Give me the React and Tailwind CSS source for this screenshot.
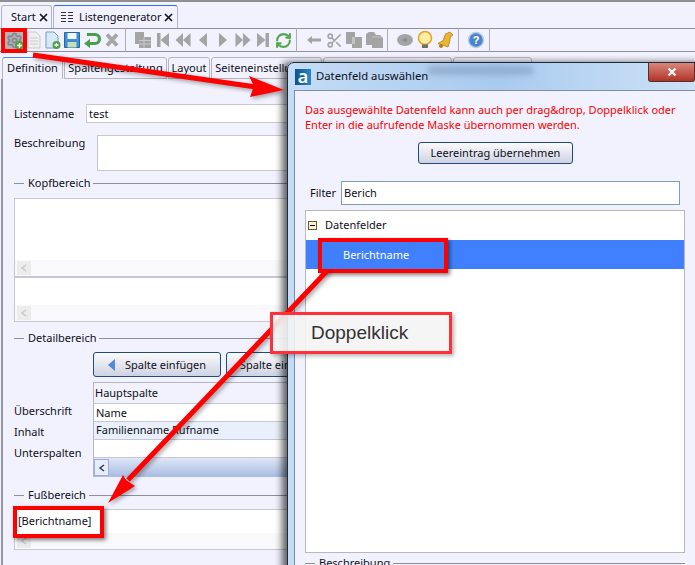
import { RefreshCw, Settings, Scissors } from 'lucide-react';

const font = { fontFamily: '"Noto Sans", Tahoma, sans-serif' };

function Sep() {
  return <div className="ml-[3px] mr-[7px] h-[24px] w-px shrink-0 bg-[#a9abb8]" />;
}

function Ico({ children }) {
  return (
    <svg viewBox="0 0 20 20" className="h-[20px] w-[20px] shrink-0">
      {children}
    </svg>
  );
}

const G = '#a4a4a4';

function CloseX() {
  return (
    <svg viewBox="0 0 9 9" className="h-[9px] w-[9px] shrink-0">
      <path d="M1 1l7 7M8 1L1 8" stroke="#15151c" strokeWidth="1.700" />
    </svg>
  );
}

function Toolbar() {
  return (
    <div className="flex h-[23px] items-center border-b border-[#8d8f9c] pl-[4px]">
      <div className="relative flex h-[20px] w-[20px] shrink-0 items-center justify-center bg-[#b4b4b8]">
        <Settings size={17} strokeWidth={2.6} color="#85888c" />
        <svg viewBox="0 0 9 9" className="absolute bottom-0 right-0 h-[9px] w-[9px]">
          <circle cx="4.500" cy="4.500" r="4.500" fill="#4aa43f" />
          <path d="M2 4.500h5M4.500 2v5" stroke="#fff" strokeWidth="1.400" />
        </svg>
      </div>
      <Ico>
        <path d="M4 2h8l4 4v12H4z" fill="#efefef" stroke="#c9c9c9" />
        <path d="M6 8h8M6 11h8M6 14h8" stroke="#cbcbcb" />
      </Ico>
      <div className="-ml-[2px]">
        <Ico>
          <path d="M4 2h8l4 4v12H4z" fill="#d9e8f8" stroke="#6f9fcf" />
          <circle cx="14.500" cy="15" r="4" fill="#4aa43f" />
          <path d="M12.500 15h4M14.500 13v4" stroke="#fff" strokeWidth="1.300" />
        </Ico>
      </div>
      <Ico>
        <path d="M2.500 2.500h15v15h-15z" fill="#3f8fd6" stroke="#2468a8" />
        <path d="M5.500 3h9v6h-9z" fill="#f3f7fb" />
        <path d="M5.500 12h9v5.500h-9z" fill="#bfe0b8" />
      </Ico>
      <Ico>
        <path d="M5 4.500h8a4.500 4.500 0 0 1 0 9H6" fill="none" stroke="#46a04a" strokeWidth="3.200" />
        <path d="M8 9v9l-6-4.500z" fill="#46a04a" />
      </Ico>
      <Ico>
        <path d="M5 4.500l10 11M15 4.500L5 15.500" stroke="#a6a6a6" strokeWidth="3.800" />
      </Ico>
      <Sep />
      <Ico>
        <path d="M2 2h9v5h7v11H6v-4H2z" fill={G} />
        <path d="M6 10.500h12M6 14h12M11 7v11" stroke="#c9c9c9" />
      </Ico>
      <Ico>
        <path d="M4 3h3.500v14H4zM16 3v14l-8.500-7z" fill={G} />
      </Ico>
      <Ico>
        <path d="M10 3v14l-7.500-7zM17.500 3v14L10 10z" fill={G} />
      </Ico>
      <Ico>
        <path d="M14 3v14l-8-7z" fill={G} />
      </Ico>
      <Ico>
        <path d="M6 3v14l8-7z" fill={G} />
      </Ico>
      <Ico>
        <path d="M2.500 3v14l7.500-7zM10 3v14l7.500-7z" fill={G} />
      </Ico>
      <Ico>
        <path d="M4 3v14l8.500-7zM12.500 3H16v14h-3.500z" fill={G} />
      </Ico>
      <div className="flex h-[20px] w-[20px] shrink-0 items-center justify-center">
        <RefreshCw size={17} strokeWidth={3} color="#55a84d" />
      </div>
      <Sep />
      <Ico>
        <path d="M3 10l5-4v2.500h9v3H8V14z" fill={G} />
      </Ico>
      <div className="flex h-[20px] w-[20px] shrink-0 items-center justify-center">
        <Scissors size={17} strokeWidth={2.2} color={G} />
      </div>
      <Ico>
        <path d="M2 2h9v5h7v11H8v-4H2z" fill={G} />
        <path d="M8 7h3v7H8z" fill="#c4c4c4" />
      </Ico>
      <Ico>
        <path d="M2 4l3-2h5l2 3h4l3 3v10H8v-3H2z" fill={G} />
        <path d="M8 7h10" stroke="#c4c4c4" />
      </Ico>
      <Sep />
      <Ico>
        <ellipse cx="10" cy="10" rx="8" ry="6" fill={G} />
        <ellipse cx="10" cy="10" rx="2.500" ry="1.800" fill="#8c8c8c" />
      </Ico>
      <Ico>
        <circle cx="10" cy="8" r="6.500" fill="#fdeea0" stroke="#e0a52e" strokeWidth="1.500" />
        <path d="M7 14.500h6v3.500H7z" fill="#6d6d6d" />
      </Ico>
      <Ico>
        <path d="M15 2l3 3-2.500 1.500-1 6-1.500 4.500-10-3.500 5-3 2.500-6.500z" fill="#e8b535" stroke="#b87f18" strokeWidth=".8" />
        <circle cx="6" cy="16" r="2" fill="#b87f18" />
      </Ico>
      <Sep />
      <Ico>
        <circle cx="10" cy="10" r="7.500" fill="#4c86c8" stroke="#b4cde9" strokeWidth="1.500" />
        <text x="10" y="14" textAnchor="middle" fontSize="11" fontWeight="700" fill="#fff" fontFamily="Liberation Sans">?</text>
      </Ico>
      <Sep />
    </div>
  );
}

function Legend({ title }) {
  return (
    <div className="flex h-[14px] items-center gap-[3px] text-[11px] leading-[14px] text-[#10101a]">
      <div className="h-px w-[10px] bg-[#8d8f9c]" />
      <span className="ml-[1px]">{title}</span>
      <div className="h-px flex-1 bg-[#8d8f9c]" />
    </div>
  );
}

function TabHead({ children, active, w }) {
  return (
    <div
      className={`flex h-[22px] shrink-0 justify-center overflow-hidden rounded-t-[3px] border border-[#b4b6c4] text-[11px] ${active ? 'items-start border-b-0 border-t-[#4d8ad8] pt-[2px]' : 'items-center whitespace-nowrap'}`}
      style={{ width: w }}
    >
      {children}
    </div>
  );
}

function HScroll({ right = true }) {
  return (
    <div className="flex h-[16px] items-center justify-between bg-[#f9f9fb] px-[2px]">
      <div className="flex h-[14px] w-[14px] items-center justify-center bg-[#ececec]">
        <svg viewBox="0 0 8 8" className="h-[8px] w-[8px]"><path d="M6 1L2 4l4 3" fill="none" stroke="#c8c8c8" strokeWidth="1.500" /></svg>
      </div>
      {right && (
        <div className="flex h-[14px] w-[14px] items-center justify-center bg-[#ececec]">
          <svg viewBox="0 0 8 8" className="h-[8px] w-[8px]"><path d="M2 1l4 3-4 3" fill="none" stroke="#c8c8c8" strokeWidth="1.500" /></svg>
        </div>
      )}
    </div>
  );
}

function Btn({ children, className = '' }) {
  return (
    <div className={`flex items-center rounded-[3px] border border-[#1f4b80] bg-gradient-to-b from-[#fbfbfe] to-[#cfd2e2] text-[11px] ${className}`}>
      {children}
    </div>
  );
}

function DefinitionForm() {
  return (
    <div className="ml-[1px] h-[486px] border-l-2 border-[#9496a3] pl-[11px] text-[11px] text-[#10101a]">
      <div className="flex items-center pt-[25px]">
        <span className="w-[72px] pt-px">Listenname</span>
        <div className="flex h-[19px] w-[400px] items-center border border-[#c6c8d6] bg-white pl-[2px] pt-px">test</div>
      </div>
      <div className="mt-[12px] flex">
        <span className="w-[83px]">Beschreibung</span>
        <div className="h-[36px] w-[400px] border border-[#c6c8d6] bg-white" />
      </div>
      <div className="mt-[5px] w-[420px]"><Legend title="Kopfbereich" /></div>
      <div className="mt-[8px] w-[420px] border border-[#c6c8d6] bg-white">
        <div className="h-[61px]" />
        <HScroll />
        <div className="h-[2px] bg-[#c6c8d6]" />
        <div className="h-[27px]" />
        <HScroll right={false} />
      </div>
      <div className="mt-[9px] w-[420px]"><Legend title="Detailbereich" /></div>
      <div className="mt-[7px] flex gap-[5px] pl-[79px]">
        <Btn className="h-[25px] w-[128px] justify-center gap-[9px]">
          <svg viewBox="0 0 8 12" className="h-[12px] w-[8px]"><path d="M7 0v12L0 6z" fill="#4d8ad8" /></svg>
          <span className="pt-px">Spalte einfügen</span>
        </Btn>
        <Btn className="h-[25px] w-[128px] pl-[13px]"><span className="pt-px">Spalte einfügen</span></Btn>
      </div>
      <div className="mt-[5px] flex">
        <div className="w-[79px] pt-[18px] leading-[21px]">
          <div>Überschrift</div>
          <div>Inhalt</div>
          <div>Unterspalten</div>
        </div>
        <div className="w-[300px] border-l border-t border-[#b4b6c4]">
          <div className="flex h-[20px] items-center pl-px pt-px">Hauptspalte</div>
          <div className="flex h-[18px] items-center border-t border-[#c6c8d6] bg-white pl-[2px] pt-px">Name</div>
          <div className="flex h-[18px] items-center border-t border-[#c6c8d6] bg-[#e9f0fb] pl-[2px]">Familienname Rufname</div>
          <div className="h-[19px] border-y border-[#c6c8d6] bg-white" />
          <div className="flex h-[19px] items-center bg-gradient-to-b from-[#dfe7f7] to-[#a9bbe0]">
            <div className="flex h-[17px] w-[15px] items-center justify-center border border-[#9db0d4] bg-[#e6ecf8]">
              <svg viewBox="0 0 8 8" className="h-[8px] w-[8px]"><path d="M6 1L2 4l4 3" fill="none" stroke="#2a3d66" strokeWidth="1.500" /></svg>
            </div>
          </div>
        </div>
      </div>
      <div className="mt-[11px] w-[420px]"><Legend title="Fußbereich" /></div>
      <div className="mt-[7px] w-[420px] border border-[#c6c8d6] bg-white">
        <div className="flex h-[23px] items-center pl-[3px]">[Berichtname]</div>
        <HScroll />
      </div>
    </div>
  );
}

function Dialog() {
  return (
    <div className="absolute left-[287px] top-[62px] h-[520px] w-[420px] overflow-hidden rounded-t-[7px] border border-[#1f2a38] bg-gradient-to-r from-[#c4dcf6] via-[#a9cbef] to-[#cfe2f7] text-[11px] text-[#10101a] shadow-[-5px_0_7px_rgba(0,0,0,0.6)]">
      <div className="absolute left-[140px] top-[3px] h-[9px] w-[105px] bg-[#7f97b8]/60 blur-[3px]" />
      <div className="relative flex h-[27px] items-center pl-[7px]">
        <div className="flex h-[16px] w-[16px] items-center justify-center bg-gradient-to-r from-[#0f4f94] to-[#2a86cc] pb-[2px] text-[18px] font-semibold leading-none text-white">a</div>
        <span className="ml-[5px] text-[11.300px]">Datenfeld auswählen</span>
      </div>
      <div className="absolute right-[11px] top-0 flex h-[19px] w-[47px] items-center justify-center rounded-b-[3px] border border-t-0 border-[#5b2b28] bg-gradient-to-b from-[#d9857a] to-[#b03228]">
        <svg viewBox="0 0 10 10" className="h-[10px] w-[10px]"><path d="M1.500 1.500l7 7M8.500 1.500l-7 7" stroke="#f2f2f2" strokeWidth="2.400" /></svg>
      </div>
      <div className="ml-[6px] h-full border-l border-t border-[#7d8fa6] bg-[#f1f2fd] pl-[10px]">
        <div className="pt-[11px] leading-[15px] text-[#ff0000]">
          <div>Das ausgewählte Datenfeld kann auch per drag&amp;drop, Doppelklick oder</div>
          <div>Enter in die aufrufende Maske übernommen werden.</div>
        </div>
        <div className="mt-[10px] flex w-[381px] justify-center">
          <Btn className="h-[22px] w-[155px] justify-center">Leereintrag übernehmen</Btn>
        </div>
        <div className="mt-[17px] flex items-center pl-[5px]">
          <span className="w-[31px]">Filter</span>
          <div className="flex h-[24px] w-[339px] items-center border border-[#7e9dbd] bg-white pl-[2px]">Berich</div>
        </div>
        <div className="mt-[5px] h-[343px] w-[380px] border border-[#b8b8bc] bg-white">
          <div className="flex h-[29px] items-center pl-[2px]">
            <div className="flex h-[9px] w-[9px] items-center justify-center border border-[#6b5a2a] bg-[#f8f4dc]">
              <div className="h-px w-[5px] bg-black" />
            </div>
            <span className="ml-[8px]">Datenfelder</span>
          </div>
          <div className="flex h-[29px] items-center bg-[#4080ff] pl-[37px] pt-px text-white">Berichtname</div>
        </div>
        <div className="mt-[3px] w-[380px]">
          <Legend title="Beschreibung" />
        </div>
      </div>
    </div>
  );
}

function Annotations() {
  return (
    <>
      <div className="absolute left-[1px] top-[28px] h-[25px] w-[26px] border-[4px] border-[#ff0000]" />
      <div className="absolute left-[13px] top-[506px] h-[32px] w-[91px] border-[4px] border-[#ff0000] shadow-[2px_2px_4px_rgba(0,0,0,0.5)]" />
      <div className="absolute left-[318px] top-[238px] h-[35px] w-[130px] border-[4px] border-[#ff0000] shadow-[2px_2px_4px_rgba(0,0,0,0.5)]" />
      <svg className="pointer-events-none absolute left-0 top-0 drop-shadow-[2px_2px_2px_rgba(0,0,0,0.35)]" width="695" height="565">
        <path d="M33 55L256 87" stroke="#ff0000" strokeWidth="5" />
        <path d="M284 90L249 76l5 10-4 11z" fill="#ff0000" />
        <path d="M328 270L128 480" stroke="#ff0000" strokeWidth="5" />
        <path d="M108 503l15-28 3 5 9 6z" fill="#ff0000" />
      </svg>
      <div className="absolute left-[270px] top-[312px] flex h-[42px] w-[182px] items-center border-[3px] border-[#ff3038] bg-[#f4f4f4]/90 pl-[38px] text-[19px] text-[#333] shadow-[2px_2px_4px_rgba(0,0,0,0.3)]" style={{ fontFamily: '"Liberation Sans", Arial, sans-serif' }}>
        Doppelklick
      </div>
    </>
  );
}

export default function App() {
  return (
    <div className="relative h-[565px] w-[695px] overflow-hidden bg-[#f1f2fd] text-[#10101a]" style={font}>
      <div className="h-[2px] bg-[#8f8f93]" />
      <div className="flex h-[27px] items-end gap-[1px] border-b border-[#8d8f9c] pl-[1px]">
        <div className="flex h-[23px] w-[51px] items-center rounded-t-[3px] border border-b-0 border-[#b4b6c4] pl-[9px] text-[11px]">
          Start
          <span className="ml-[3px]"><CloseX /></span>
        </div>
        <div className="flex h-[23px] w-[125px] items-center rounded-t-[3px] border border-b-0 border-[#b4b6c4] border-t-[#2f6fd0] pl-[7px] text-[11px]">
          <svg viewBox="0 0 12 10" className="mr-[6px] h-[10px] w-[12px] shrink-0"><path d="M0 .5h5M7 .5h5M0 3.500h5M7 3.500h5M0 6.500h5M7 6.500h5M0 9.500h5M7 9.500h5" stroke="#333" /></svg>
          Listengenerator
          <span className="ml-[3px]"><CloseX /></span>
        </div>
      </div>
      <Toolbar />
      <div className="flex gap-[1px] pl-[2px] pt-[5px] text-[#10101a]">
        <TabHead w={61} active>Definition</TabHead>
        <TabHead w={103}>Spaltengestaltung</TabHead>
        <TabHead w={42}>Layout</TabHead>
        <TabHead w={111}>Seiteneinstellungen</TabHead>
        <TabHead w={129} />
        <TabHead w={79} />
      </div>
      <DefinitionForm />
      <Dialog />
      <Annotations />
    </div>
  );
}
